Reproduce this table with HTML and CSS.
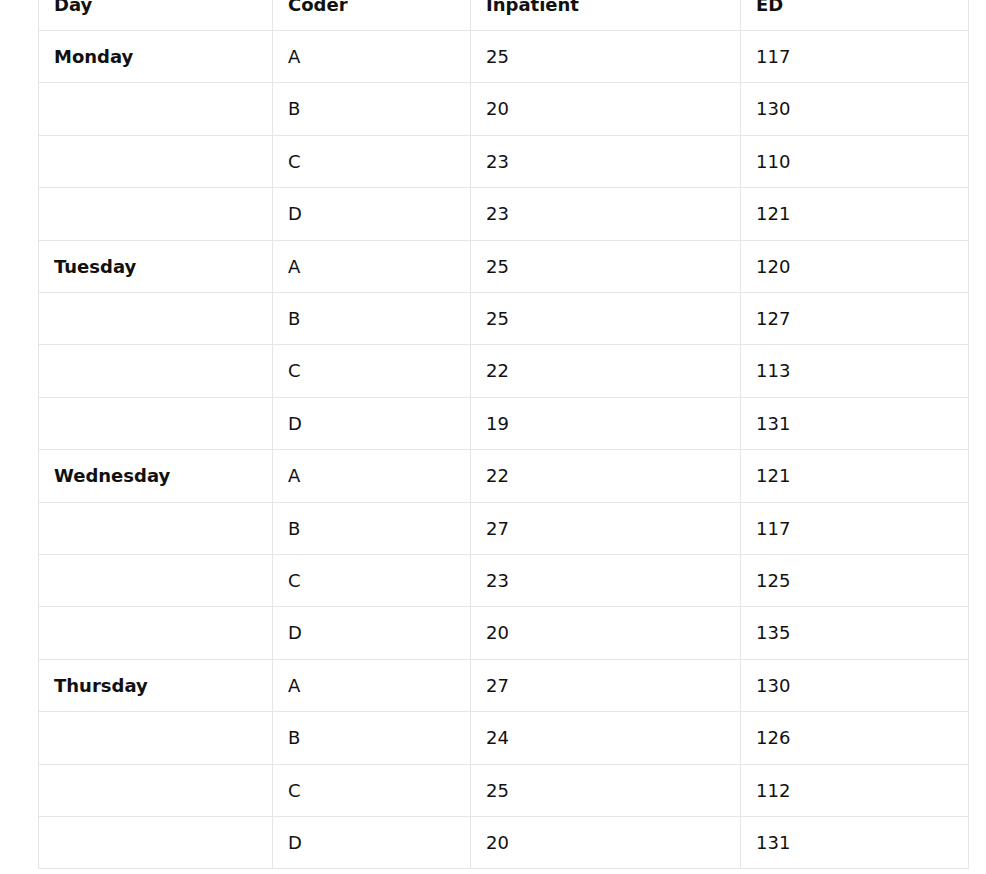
FILE: index.html
```html
<!DOCTYPE html>
<html lang="en">
<head>
<meta charset="utf-8">
<title>Coder productivity</title>
<link rel="stylesheet" href="styles.css">
</head>
<body>
<main class="page">
<table class="data">
<colgroup>
<col class="c-day"><col class="c-coder"><col class="c-inp"><col class="c-ed">
</colgroup>
<thead>
<tr><th>Day</th><th>Coder</th><th>Inpatient</th><th>ED</th></tr>
</thead>
<tbody>
<tr><td class="day">Monday</td><td>A</td><td>25</td><td>117</td></tr>
<tr><td></td><td>B</td><td>20</td><td>130</td></tr>
<tr><td></td><td>C</td><td>23</td><td>110</td></tr>
<tr><td></td><td>D</td><td>23</td><td>121</td></tr>
<tr><td class="day">Tuesday</td><td>A</td><td>25</td><td>120</td></tr>
<tr><td></td><td>B</td><td>25</td><td>127</td></tr>
<tr><td></td><td>C</td><td>22</td><td>113</td></tr>
<tr><td></td><td>D</td><td>19</td><td>131</td></tr>
<tr><td class="day">Wednesday</td><td>A</td><td>22</td><td>121</td></tr>
<tr><td></td><td>B</td><td>27</td><td>117</td></tr>
<tr><td></td><td>C</td><td>23</td><td>125</td></tr>
<tr><td></td><td>D</td><td>20</td><td>135</td></tr>
<tr><td class="day">Thursday</td><td>A</td><td>27</td><td>130</td></tr>
<tr><td></td><td>B</td><td>24</td><td>126</td></tr>
<tr><td></td><td>C</td><td>25</td><td>112</td></tr>
<tr><td></td><td>D</td><td>20</td><td>131</td></tr>
</tbody>
</table>
</main>
</body>
</html>
```
FILE: styles.css
```css
html, body {
  margin: 0;
  padding: 0;
  background: #ffffff;
}
body {
  font-family: "DejaVu Sans", sans-serif;
  font-size: 18px;
  color: #111111;
  overflow: hidden;
}
.page {
  padding-left: 38px;
  margin-top: -22.5px;
}
.data {
  border-collapse: collapse;
  table-layout: fixed;
  width: 930px;
}
.c-day { width: 234px; }
.c-coder { width: 198px; }
.c-inp { width: 270px; }
.c-ed { width: 228px; }
.data th,
.data td {
  border: 1px solid #e6e6e6;
  padding: 15px 15px;
  line-height: 21.4px;
  text-align: left;
  vertical-align: middle;
}
.data th {
  font-weight: bold;
}
.data td.day {
  font-weight: bold;
}
```
